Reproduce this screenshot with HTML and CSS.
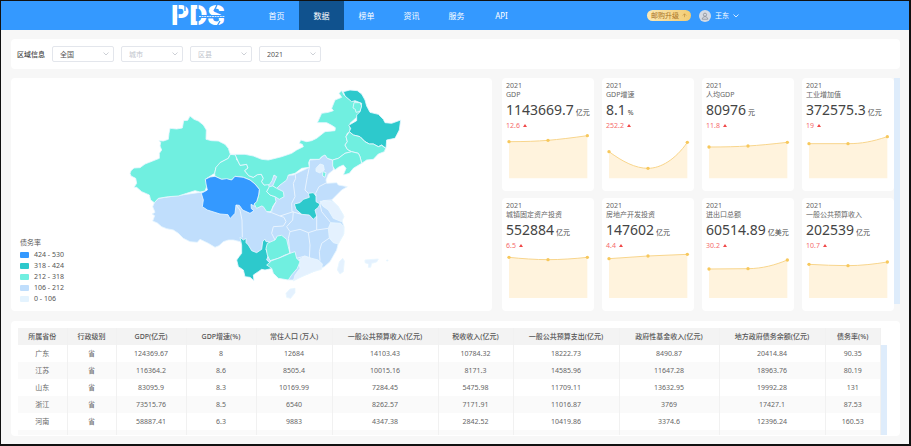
FILE: index.html
```html
<!DOCTYPE html>
<html lang="zh-CN">
<head>
<meta charset="utf-8">
<meta name="viewport" content="width=device-width, initial-scale=1">
<title>PDS</title>
<link rel="stylesheet" href="styles.css">
</head>
<body>
<header class="topbar">
  <a class="logo" href="#" aria-label="PDS">PDS
    <svg class="logo-cuts" viewBox="0 0 56 29" aria-hidden="true">
      <path d="M7 4v21M27 4v21M14 4v6M34 21l7 6M46 4l-3 6M38 9l-5-5M45 27l4-7" stroke="#3499ff" stroke-width="1.3"/>
      <path d="M27 15.5h28" stroke="#3499ff" stroke-width="3"/>
      <path d="M28 15.5h26" stroke="#d8ebff" stroke-width="1" stroke-dasharray="2 .6"/>
    </svg>
  </a>
  <nav class="nav">
    <a href="#">首页</a><a href="#" class="active">数据</a><a href="#">榜单</a><a href="#">资讯</a><a href="#">服务</a><a href="#">API</a>
  </nav>
  <div class="account">
    <button class="upgrade">邮购升级<svg viewBox="0 0 6 6" aria-hidden="true"><path d="M1 3l2-2 2 2M3 1v4" fill="none" stroke="#b98432" stroke-width=".7"/></svg></button>
    <button class="user">
      <svg class="avatar" viewBox="0 0 12 12" aria-hidden="true"><circle cx="6" cy="6" r="6" fill="#d5dae3"/><circle cx="6" cy="4.7" r="1.6" fill="none" stroke="#8b8f98" stroke-width=".8"/><path d="M3.2 9.2c.2-3.4 5.4-3.4 5.6 0z" fill="none" stroke="#8b8f98" stroke-width=".8"/></svg>
      王东
      <svg class="chevron" viewBox="0 0 6 4" aria-hidden="true"><path d="M.5 .5L3 3 5.5 .5"/></svg>
    </button>
  </div>
</header>

<main class="page">
  <form class="card filters">
    <label for="province">区域信息</label>
    <div class="picker"><select id="province"><option>全国</option></select><svg class="chevron" viewBox="0 0 6 4" aria-hidden="true"><path d="M.5 .5L3 3 5.5 .5"/></svg></div>
    <div class="picker empty"><select aria-label="城市"><option>城市</option></select><svg class="chevron" viewBox="0 0 6 4" aria-hidden="true"><path d="M.5 .5L3 3 5.5 .5"/></svg></div>
    <div class="picker empty"><select aria-label="区县"><option>区县</option></select><svg class="chevron" viewBox="0 0 6 4" aria-hidden="true"><path d="M.5 .5L3 3 5.5 .5"/></svg></div>
    <div class="picker"><select aria-label="年份"><option>2021</option></select><svg class="chevron" viewBox="0 0 6 4" aria-hidden="true"><path d="M.5 .5L3 3 5.5 .5"/></svg></div>
  </form>

  <div class="overview">
    <section class="card map">
      <svg class="china" viewBox="-327 -6 1443 699" role="img" aria-label="债务率">
        <g class="region">
          <path class="l2" d="M103 368L115 355 255 335 400 290 520 285 568 262 568 240 598 238 615 222 622 235 638 240 640 258 640 270 625 282 618 300 620 310 650 308 655 315 682 320 665 330 650 345 635 360 655 380 670 405 665 420 672 440 672 460 655 490 650 510 630 545 613 560 580 575 520 600 505 600 475 570 380 520 360 485 340 480 325 480 310 485 297 497 285 502 265 490 240 478 232 487 210 485 190 475 175 460 160 450 140 446 125 440 112 429 98 423 104 407 96 402 105 397 98 380Z"/>
          <path class="l3" d="M33 272L42 264 60 263 75 252 98 243 118 235 118 220 125 210 120 198 122 187 117 182 130 183 145 178 147 160 150 145 170 147 187 144 191 122 203 121 210 108 222 118 235 123 250 135 259 150 258 178 275 182 295 183 315 193 325 205 331 223 325 235 300 248 296 260 288 262 284 280 256 298 262 315 255 333 240 336 225 332 200 340 175 348 145 350 115 355 103 368 92 360 88 345 65 335 50 322 42 322 50 310 47 295 33 288 30 280Z"/>
          <path class="l3" d="M331 223L348 225 350 240 355 245 360 256 380 253 384 264 374 272 386 287 400 292 412 284 424 283 430 295 425 305 432 315 445 312 448 322 440 335 450 345 465 350 468 365 458 380 455 395 440 395 430 380 425 378 410 385 402 372 410 365 416 345 418 328 405 312 390 300 370 292 345 289 335 300 305 298 285 289 284 280 288 262 300 248 325 235Z"/>
          <path class="l3" d="M331 223L375 223 400 228 425 238 445 240 470 234 485 230 515 220 530 210 550 200 547 193 538 190 542 180 560 185 575 182 590 175 615 155 645 152 646 143 635 136 620 128 592 128 605 100 625 97 640 92 635 85 645 60 665 52 657 40 665 32 672 45 690 60 718 68 722 90 712 110 690 130 690 155 682 160 678 170 682 185 675 195 682 208 695 215 675 220 655 235 638 240 622 235 615 225 605 230 598 238 570 238 566 248 568 262 545 265 525 280 505 285 500 300 480 315 470 325 458 318 470 290 462 285 456 302 448 314 432 315 425 305 430 295 424 283 412 284 400 292 386 287 374 272 384 264 380 253 360 256 355 245 345 223Z"/>
          <path class="l3" d="M448 320L458 318 470 325 490 335 492 350 478 358 465 350 450 345 440 335Z"/>
          <path class="l4" d="M670 35L690 30 712 32 725 42 735 60 740 78 750 97 775 103 790 118 795 128 815 130 842 120 838 150 825 175 800 180 798 205 785 195 775 200 760 192 748 192 735 185 720 170 700 165 688 155 692 145 686 136 710 122 710 105 720 95 725 70 705 62 695 65 675 48Z"/>
          <path class="l3" d="M702 68L720 68 725 78 720 94 708 97 706 88 699 84Z"/>
          <path class="l3" d="M688 155L700 165 720 170 735 185 748 192 760 192 775 200 785 196 797 205 793 215 775 222 760 238 740 240 725 250 720 230 715 220 695 215 682 208 675 195 682 185 678 170Z"/>
          <path class="l3" d="M638 240L655 235 675 220 695 215 715 220 720 230 725 250 700 265 688 280 670 285 678 265 670 255 655 262 645 270 638 258Z"/>
          <path class="l5" d="M588 265L600 252 610 255 613 270 600 279 588 274Z"/>
          <path class="l3" d="M608 275L618 278 615 292 608 288Z"/>
          <path class="l5" d="M600 364L635 363 655 380 662 395 672 410 665 425 640 415 625 390 608 378Z"/>
          <path class="l5" d="M632 428L662 430 672 442 670 465 655 492 640 488 628 474 625 445Z"/>
          <path class="l5" d="M535 540L555 528 575 535 595 540 607 552 605 568 580 575 550 588 520 603 525 585 540 565Z"/>
          <path class="l5" d="M498 640L510 627 525 625 525 638 512 655 500 652Z"/>
          <path class="l5" d="M668 535L673 543 670 575 660 582 652 570 658 545Z"/>
          <path class="l5" d="M735 540L775 537 770 546 755 550 752 562 745 562 746 552 735 548ZM800 540h4v3h-4z"/>
          <path class="l1" d="M256 298L270 291 285 289 305 298 320 296 335 300 345 289 370 292 390 300 405 312 418 328 416 345 410 365 402 372 406 380 393 373 394 386 402 392 390 400 368 390 358 376 348 375 345 400 330 416 324 404 300 402 262 390 247 380 250 360 244 340 262 330 258 312Z"/>
          <path class="l4" d="M523 372L540 368 550 358 568 352 565 340 580 338 588 348 588 365 600 372 595 382 585 390 590 408 580 418 568 405 545 403 528 388Z"/>
          <path class="l4" d="M360 472L370 480 378 475 378 488 385 495 395 512 410 518 425 508 428 485 435 477 438 485 448 485 445 495 438 508 445 525 440 540 455 552 458 565 435 570 425 568 415 575 400 585 402 602 390 592 375 590 370 570 355 560 350 540 357 530 365 520 365 495Z"/>
          <path class="l3" d="M438 505L442 490 465 480 472 468 485 466 500 478 505 500 510 520 495 525 475 535 450 542 442 525Z"/>
          <path class="l3" d="M455 542L480 533 510 520 525 515 530 535 540 545 532 565 515 585 505 600 475 595 460 580 455 565 440 555Z"/>
        </g>
        <path class="borders" d="M525 280L527 295 520 310 525 350 515 370 516 395M568 262L562 290 555 330 565 340M620 308L597 320 587 340 588 348M600 372L605 395 632 428M600 372L608 362 635 360M348 375L360 390 366 420 367 472M440 395L455 398 480 408 492 412 498 425 490 438 460 440 455 460 465 480M480 408L520 395 518 420 500 440 510 455 540 448 565 458 590 450 625 445M510 455L505 475 510 520M565 458L570 495 568 535M628 474L605 490 598 515 600 542M516 395L545 403M590 408L590 450M450 398L468 365M530 535L555 528"/>
      </svg>
      <div class="legend">
        <h2>债务率</h2>
        <ul>
          <li><i class="b1"></i>424 - 530</li>
          <li><i class="b2"></i>318 - 424</li>
          <li><i class="b3"></i>212 - 318</li>
          <li><i class="b4"></i>106 - 212</li>
          <li><i class="b5"></i>0 - 106</li>
        </ul>
      </div>
    </section>

    <section class="metrics">
      <div class="metric-grid">
        <article class="card metric">
          <p>2021</p><h3>GDP</h3><p class="value">1143669.7<small>亿元</small></p><p class="change">12.6</p>
          <svg viewBox="0 165 276 175" aria-hidden="true"><path class="area" d="M21 200Q90 200 138 196T256 182V310H21Z"/><path class="line" d="M21 200Q90 200 138 196T256 182"/><circle cx="21" cy="200" r="5"/><circle cx="138" cy="196" r="5"/><circle cx="256" cy="182" r="5"/></svg>
        </article>
        <article class="card metric">
          <p>2021</p><h3>GDP增速</h3><p class="value">8.1<small>%</small></p><p class="change">252.2</p>
          <svg viewBox="0 165 276 175" aria-hidden="true"><path class="area" d="M21 230C62 260 100 280 138 280S220 254 256 202V310H21Z"/><path class="line" d="M21 230C62 260 100 280 138 280S220 254 256 202"/><circle cx="21" cy="230" r="5"/><circle cx="138" cy="280" r="5"/><circle cx="256" cy="202" r="5"/></svg>
        </article>
        <article class="card metric">
          <p>2021</p><h3>人均GDP</h3><p class="value">80976<small>元</small></p><p class="change">11.8</p>
          <svg viewBox="0 165 276 175" aria-hidden="true"><path class="area" d="M21 216Q90 216 138 213T256 202V310H21Z"/><path class="line" d="M21 216Q90 216 138 213T256 202"/><circle cx="21" cy="216" r="5"/><circle cx="138" cy="213" r="5"/><circle cx="256" cy="202" r="5"/></svg>
        </article>
        <article class="card metric">
          <p>2021</p><h3>工业增加值</h3><p class="value">372575.3<small>亿元</small></p><p class="change">19</p>
          <svg viewBox="0 165 276 175" aria-hidden="true"><path class="area" d="M21 206H138C180 206 210 200 256 185V310H21Z"/><path class="line" d="M21 206H138C180 206 210 200 256 185"/><circle cx="21" cy="206" r="5"/><circle cx="138" cy="206" r="5"/><circle cx="256" cy="185" r="5"/></svg>
        </article>
        <article class="card metric">
          <p>2021</p><h3>城镇固定资产投资</h3><p class="value">552884<small>亿元</small></p><p class="change">6.5</p>
          <svg viewBox="0 165 276 175" aria-hidden="true"><path class="area" d="M21 187C60 191 100 194 138 194S220 191 256 187V309H21Z"/><path class="line" d="M21 187C60 191 100 194 138 194S220 191 256 187"/><circle cx="21" cy="187" r="5"/><circle cx="138" cy="194" r="5"/><circle cx="256" cy="187" r="5"/></svg>
        </article>
        <article class="card metric">
          <p>2021</p><h3>房地产开发投资</h3><p class="value">147602<small>亿元</small></p><p class="change">4.4</p>
          <svg viewBox="0 165 276 175" aria-hidden="true"><path class="area" d="M21 191L138 183 256 178V309H21Z"/><path class="line" d="M21 191L138 183 256 178"/><circle cx="21" cy="191" r="5"/><circle cx="138" cy="183" r="5"/><circle cx="256" cy="178" r="5"/></svg>
        </article>
        <article class="card metric">
          <p>2021</p><h3>进出口总额</h3><p class="value">60514.89<small>亿美元</small></p><p class="change">30.2</p>
          <svg viewBox="0 165 276 175" aria-hidden="true"><path class="area" d="M21 222L138 221C180 221 220 210 256 195V309H21Z"/><path class="line" d="M21 222L138 221C180 221 220 210 256 195"/><circle cx="21" cy="222" r="5"/><circle cx="138" cy="221" r="5"/><circle cx="256" cy="195" r="5"/></svg>
        </article>
        <article class="card metric">
          <p>2021</p><h3>一般公共预算收入</h3><p class="value">202539<small>亿元</small></p><p class="change">10.7</p>
          <svg viewBox="0 165 276 175" aria-hidden="true"><path class="area" d="M21 208C60 210 100 212 138 212S220 207 256 201V309H21Z"/><path class="line" d="M21 208C60 210 100 212 138 212S220 207 256 201"/><circle cx="21" cy="208" r="5"/><circle cx="138" cy="212" r="5"/><circle cx="256" cy="201" r="5"/></svg>
        </article>
      </div>
      <div class="scrollbar"></div>
    </section>
  </div>

  <section class="card report">
    <table>
      <colgroup><col class="w49"><col class="w49"><col class="w70"><col class="w70"><col class="w76"><col class="w106"><col class="w75"><col class="w106"><col class="w100"><col class="w106"><col></colgroup>
      <thead><tr><th>所属省份</th><th>行政级别</th><th>GDP(亿元)</th><th>GDP增速(%)</th><th>常住人口 (万人)</th><th>一般公共预算收入(亿元)</th><th>税收收入(亿元)</th><th>一般公共预算支出(亿元)</th><th>政府性基金收入(亿元)</th><th>地方政府债务余额(亿元)</th><th>债务率(%)</th></tr></thead>
      <tbody>
        <tr><td>广东</td><td>省</td><td>124369.67</td><td>8</td><td>12684</td><td>14103.43</td><td>10784.32</td><td>18222.73</td><td>8490.87</td><td>20414.84</td><td>90.35</td></tr>
        <tr><td>江苏</td><td>省</td><td>116364.2</td><td>8.6</td><td>8505.4</td><td>10015.16</td><td>8171.3</td><td>14585.96</td><td>11647.28</td><td>18963.76</td><td>80.19</td></tr>
        <tr><td>山东</td><td>省</td><td>83095.9</td><td>8.3</td><td>10169.99</td><td>7284.45</td><td>5475.98</td><td>11709.11</td><td>13632.95</td><td>19992.28</td><td>131</td></tr>
        <tr><td>浙江</td><td>省</td><td>73515.76</td><td>8.5</td><td>6540</td><td>8262.57</td><td>7171.91</td><td>11016.87</td><td>3769</td><td>17427.1</td><td>87.53</td></tr>
        <tr><td>河南</td><td>省</td><td>58887.41</td><td>6.3</td><td>9883</td><td>4347.38</td><td>2842.52</td><td>10419.86</td><td>3374.6</td><td>12396.24</td><td>160.53</td></tr>
        <tr class="next"><td></td><td></td><td></td><td></td><td></td><td></td><td></td><td></td><td></td><td></td><td></td></tr>
      </tbody>
    </table>
    <div class="scrollbar"></div>
  </section>
</main>
</body>
</html>
```

FILE: styles.css
```css
* { box-sizing: border-box; }

body {
  margin: 0;
  min-height: 100vh;
  border: solid #111;
  border-width: 1px 2px 2px 1px;
  background: #f7f7f7;
  color: #555;
  font: 7px/9px "Noto Sans", "Noto Sans CJK SC", sans-serif;
}

h2, h3, p, ul { margin: 0; padding: 0; font-size: 7px; font-weight: 400; }
ul { list-style: none; }
a { color: inherit; text-decoration: none; }
button, select { font: inherit; color: inherit; border: 0; padding: 0; background: none; }
svg { display: block; }

.card { background: #fff; border-radius: 4px; }

.chevron { width: 6px; height: 4px; fill: none; stroke: currentColor; stroke-width: .8; }

/* Top bar */
.topbar {
  display: flex;
  height: 29px;
  padding: 0 170px;
  background: #3499ff;
  color: #fff;
}
.logo {
  position: relative;
  width: 56px;
  margin-right: 27px;
  font: 900 28px/30px Roboto, sans-serif;
}
.logo-cuts { position: absolute; inset: 0; width: 56px; height: 29px; }
.nav { display: flex; font-size: 8px; line-height: 29px; }
.nav a { width: 45px; text-align: center; }
.nav .active { background: #10528e; }
.account { display: flex; align-items: center; gap: 8px; margin-left: auto; }
.upgrade {
  display: flex;
  align-items: center;
  justify-content: center;
  gap: 3px;
  width: 44px;
  height: 11px;
  border-radius: 6px;
  background: linear-gradient(90deg, #fbe8b4, #f3cc73);
  color: #a8721f;
}
.upgrade svg { width: 5px; height: 5px; }
.user { display: flex; align-items: center; gap: 4px; }
.avatar { width: 12px; height: 12px; }

/* Page body */
.page {
  display: flex;
  flex-direction: column;
  gap: 9px;
  padding: 9px 9px 8px 10px;
}

.filters {
  display: flex;
  align-items: center;
  gap: 7px;
  height: 30px;
  padding: 0 6px;
  color: #555;
}
.filters label { font-weight: 500; color: #444; }
.picker { display: grid; align-items: center; width: 62px; }
.picker > * { grid-area: 1 / 1; }
.picker select {
  appearance: none;
  width: 100%;
  height: 16px;
  padding: 0 7px;
  border: 1px solid #e3e6ec;
  border-radius: 2px;
}
.picker .chevron { justify-self: end; margin-right: 5px; color: #c0c4cc; pointer-events: none; }
.empty select { color: #c0c4cc; }

.overview { display: flex; gap: 10px; }

/* Map */
.map { position: relative; flex: 481; min-width: 0; }
.china { width: 100%; }
.region path { stroke: #e8f6ff; stroke-width: 2.5; stroke-linejoin: round; }
.borders { fill: none; stroke: #e9f4ff; stroke-width: 3; stroke-linejoin: round; }
.l1 { fill: #3499ff; }
.l2 { fill: #c0defc; }
.l3 { fill: #70efe0; }
.l4 { fill: #2dc9cc; }
.l5 { fill: #e4f1fe; }
.legend { position: absolute; left: 9px; bottom: 7px; }
.legend li { display: flex; align-items: center; gap: 5px; height: 11px; }
.legend h2 { margin-bottom: 2px; }
.legend i { width: 9px; height: 6px; border-radius: 1px; }
.b1 { background: #3499ff; }
.b2 { background: #2dc9cc; }
.b3 { background: #70efe0; }
.b4 { background: #c0defc; }
.b5 { background: #e4f3fe; }

/* Metric cards */
.metrics { display: flex; flex: 398; min-width: 0; }
.metric-grid {
  display: grid;
  flex: 1;
  grid-template-columns: repeat(4, minmax(0, 1fr));
  gap: 7px 8px;
}
.metric { padding-top: 3px; white-space: nowrap; overflow: hidden; }
.metric p, .metric h3 { padding-left: 4px; color: #666; }
.metric .value { color: #444; font-size: 14px; line-height: 22px; }
.value small { margin-left: 2px; font-size: 7px; line-height: 1; }
.metric .change { height: 9px; color: #f56c6c; }
.change::after {
  content: "";
  display: inline-block;
  margin: 0 0 1px 3px;
  border: solid transparent;
  border-width: 0 2px 3px;
  border-bottom-color: #f04848;
}
.metric svg { width: 100%; }
.area { fill: #fff3dd; }
.line { fill: none; stroke: #f8d58c; stroke-width: 3; }
.metric circle { fill: #f7c85c; }

.scrollbar { flex: none; width: 6px; background: #deecfb; }
.metrics .scrollbar { margin-bottom: 7px; }

/* Table */
.report {
  display: flex;
  height: 115px;
  margin-top: 1px;
  padding: 7px 13px 1px 7px;
  overflow: hidden;
}
.report table { flex: 1; min-width: 0; width: 100%; table-layout: fixed; border-collapse: collapse; }
.report .scrollbar { margin-top: 17px; }
th, td {
  height: 17px;
  padding: 0;
  border-right: 1px solid #f1f1f1;
  text-align: center;
  white-space: nowrap;
}
th { background: #f3f3f3; font-weight: 500; }
td { color: #666; }
tbody tr:nth-child(even) { background: #fafafa; }
.next td { height: 5px; }
.w49 { width: 49px; }
.w70 { width: 70px; }
.w75 { width: 75px; }
.w76 { width: 76px; }
.w100 { width: 100px; }
.w106 { width: 106px; }
```
